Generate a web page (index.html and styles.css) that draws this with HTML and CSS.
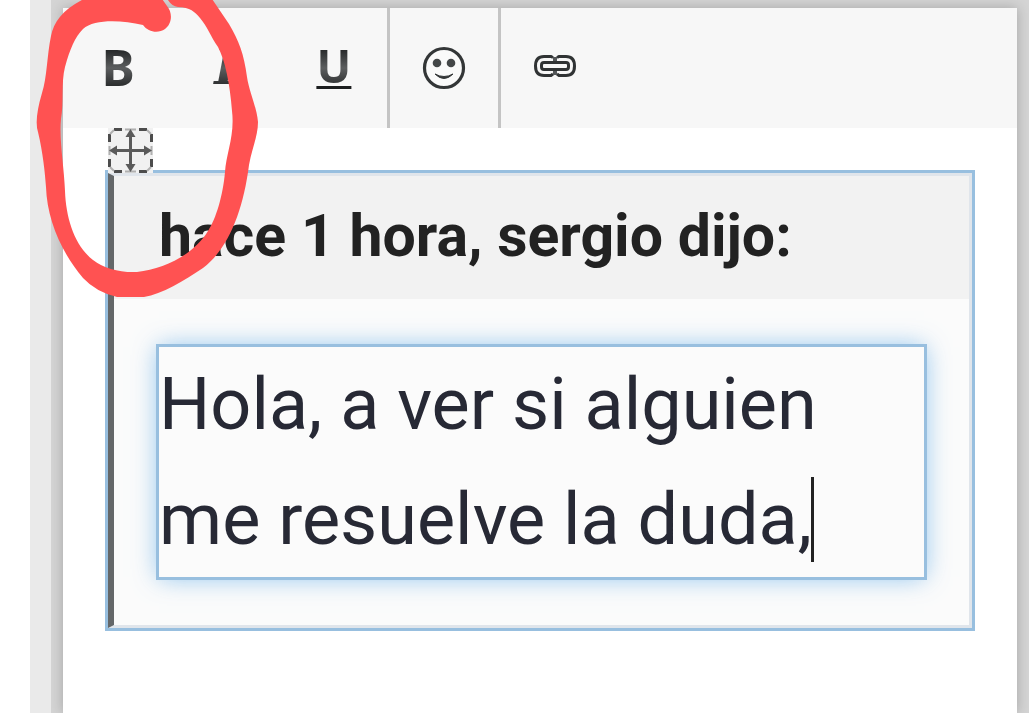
FILE: index.html
```html
<!DOCTYPE html>
<html lang="es">
<head>
  <meta charset="UTF-8">
  <meta name="viewport" content="width=device-width, initial-scale=1.0">
  <title>Responder</title>
  <link rel="stylesheet" href="styles.css">
</head>
<body>
  <div class="page">
    <div class="wrap">
      <div class="editor">
        <!-- Toolbar -->
        <div class="toolbar">
          <div class="group">
            <button type="button" aria-label="Negrita"><span class="letter bold">B</span></button>
            <button type="button" aria-label="Cursiva"><span class="letter italic">I</span></button>
            <button type="button" aria-label="Subrayado"><span class="letter underline">U</span></button>
          </div>
          <div class="group">
            <button type="button" aria-label="Emoticono">
              <svg width="44" height="44" viewBox="0 0 44 44">
                <circle cx="22" cy="22" r="19.5" fill="#fafafa" stroke="#333637" stroke-width="3.2"/>
                <circle cx="15" cy="17" r="4.3" fill="#444748"/>
                <circle cx="29" cy="17" r="4.3" fill="#444748"/>
                <path d="M13 28Q22 37 31 28Q22 33 13 28Z" fill="#333637" stroke="#333637" stroke-width="1"/>
              </svg>
            </button>
          </div>
          <div class="group">
            <button type="button" aria-label="Enlace">
              <svg width="44" height="28" viewBox="0 0 44 28" fill="none" stroke="#303334" stroke-width="3">
                <path d="M20 3.500 18 2.500H11Q2.500 2.500 2.500 12T11 21.500H18L20 20M24 3.500 26 2.500H33Q41.500 2.500 41.500 12T33 21.500H26L24 20"/>
                <path d="M22 3V8M22 16V21" stroke="#55585a" stroke-width="4"/>
                <rect x="8.500" y="8.500" width="27" height="7" rx="2.500"/>
              </svg>
            </button>
          </div>
        </div>

        <!-- Content -->
        <div class="content">
          <div class="quote">
            <svg class="drag-handle" width="45" height="45" viewBox="0 0 45 45">
              <rect width="45" height="45" fill="#f1f1f1"/>
              <path d="M1.500 14V6M6 1.500H14M31 1.500H39M43.500 6V14M43.500 31V39M39 43.500H31M14 43.500H6M1.500 39V31" stroke="#4c4c4c" stroke-width="3"/>
              <path d="M2 6 6 2M39 2 43 6M43 39 39 43M6 43 2 39M17 1.500H28M17 43.500H28M1.500 18V27M43.500 18V27" stroke="#b0b0b0" stroke-width="2"/>
              <path d="M22.500 5V40M5 22.500H40" stroke="#5a5a5a" stroke-width="3"/>
              <path d="M22.500 1 27.500 9H17.500ZM22.500 44 27.500 36H17.500ZM1 22.500 9 17.500V27.500ZM44 22.500 36 17.500V27.500Z" fill="#5a5a5a"/>
            </svg>
            <label class="quote-title" for="message">hace 1 hora, sergio dijo:</label>
            <div class="quote-body">
              <textarea id="message" rows="2" spellcheck="false">Hola, a ver si alguien
me resuelve la duda,</textarea>
              <span class="caret"></span>
            </div>
          </div>
        </div>
      </div>
    </div>
  </div>

  <!-- Hand drawn circle -->
  <svg class="mark" width="270" height="310" viewBox="0 0 270 310">
    <path fill="#ff5252" d="M88 -3C64 8 54 21 51 36C47 55 47 78 42 93Q34 120 38 132C43 153 45 173 46 187C47 219 61 252 83 278Q96 292 117 297H144C162 294 184 281 203 268C228 249 243 212 249 165C252 148 258 136 258 122C257 108 249 91 247 77C244 54 239 41 229 24L210 -4H166Q170 6 178 7C190 7 195 12 200 18C207 26 211 37 218 47C225 60 230 84 232 111C235 135 226 154 225 172C223 195 216 219 208 231C194 254 165 269 137 272Q110 273 93 260C75 246 66 219 65 191C64 166 59 140 61 119C64 103 61 82 65 67C70 49 75 37 83 29C94 19 121 20 143 25C148 32 158 34 165 29C172 24 173 13 167 6L160 -4Z"/>
  </svg>
</body>
</html>
```

FILE: styles.css
```css
* {
  box-sizing: border-box;
}

body {
  margin: 0;
  min-height: 100vh;
  padding-left: 30px;
  display: flex;
  background: #fff;
  font-family: Roboto, sans-serif;
  overflow: hidden;
}

.page {
  flex: 1;
  display: flex;
  padding-left: 21px;
  background: #eaeaea;
}

.wrap {
  flex: 1;
  display: flex;
  padding: 8px 12px 0;
  background: #d4d4d4;
  overflow: hidden;
}

.editor {
  flex: 1;
  background: #fff;
  box-shadow: 0 0 12px rgba(0, 0, 0, 0.22);
}

/* Toolbar */
.toolbar {
  display: flex;
  height: 120px;
  background: #f7f7f7;
}

.group {
  display: flex;
}

.group + .group {
  border-left: 3px solid #c4c4c4;
}

button {
  display: flex;
  width: 108px;
  padding: 0;
  border: none;
  background: none;
  justify-content: center;
  align-items: center;
  cursor: pointer;
}

button:hover {
  background: #ececec;
}

.letter {
  padding: 0 0 2px 2px;
  font: bold 50px/60px "Noto Sans", sans-serif;
  color: transparent;
  background: linear-gradient(#242627 20%, #5c5e5f 50%, #292b2c 80%);
  -webkit-background-clip: text;
  background-clip: text;
}

.italic {
  font-family: "DejaVu Serif", serif;
  font-style: italic;
}

.underline {
  padding-bottom: 6px;
  font-size: 46px;
  text-decoration: underline;
  text-decoration-color: #1c1e1f;
  text-decoration-thickness: 3px;
  text-underline-offset: 3px;
}

/* Content */
.content {
  padding: 45px;
}

.quote {
  position: relative;
  border: 3px solid #e0e5eb;
  border-left: 6px solid #646769;
  outline: 3px solid #98bfdf;
  background: #fbfbfb;
}

.drag-handle {
  position: absolute;
  left: -6px;
  top: -48px;
}

.quote-title {
  display: block;
  padding: 22px 45px 26px;
  background: #f2f2f2;
  color: #222;
  font-size: 59px;
  font-weight: bold;
  line-height: 75px;
}

.quote-body {
  position: relative;
  padding: 48px 45px;
}

textarea {
  display: block;
  width: 100%;
  height: 230px;
  padding: 0;
  border: none;
  outline: 3px solid #98bfdf;
  box-shadow: 0 0 24px rgba(102, 175, 233, 0.8);
  background: #fbfbfb;
  color: #272935;
  font-family: inherit;
  font-size: 72px;
  line-height: 115px;
  resize: none;
  overflow: hidden;
}

.caret {
  position: absolute;
  left: 697px;
  bottom: 63px;
  width: 3px;
  height: 85px;
  background: #222;
}

.mark {
  position: absolute;
  left: 0;
  top: 0;
  pointer-events: none;
}
```
